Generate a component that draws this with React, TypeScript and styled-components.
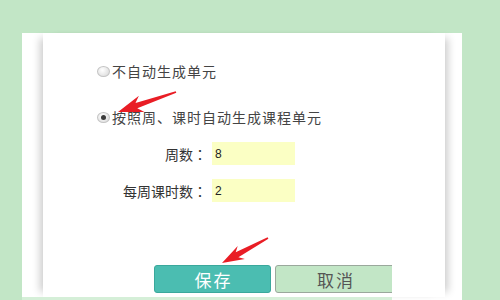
import React from 'react'
import styled, { createGlobalStyle } from 'styled-components'

const GlobalStyle = createGlobalStyle`
  body {
    margin: 0;
    font-family: "Noto Sans CJK SC", "Liberation Sans", sans-serif;
  }
  #root {
    width: 500px;
    height: 300px;
    overflow: hidden;
  }
`

const Page = styled.div`
  position: relative;
  width: 500px;
  height: 300px;
  box-sizing: border-box;
  padding: 33px 0 0 22px;
  background: #c2e6c6;
`

const Panel = styled.div`
  width: 440px;
  height: 267px;
  background: #ffffff;
  display: flex;
  flex-direction: column;
`

const PanelBody = styled.div`
  flex: 1;
  min-height: 0;
  padding-left: 21px;
`

const Content = styled.div`
  width: 402px;
  height: 100%;
  box-sizing: border-box;
  padding: 28px 0 0 54px;
  background: #ffffff;
  display: flex;
  flex-direction: column;
  box-shadow: -8px 0 8px -5px rgba(0, 0, 0, 0.2), 8px 0 8px -5px rgba(0, 0, 0, 0.2);
`

const Footer = styled.div`
  height: 3px;
  display: flex;
`

const FooterStrip = styled.div`
  width: 370px;
  background: #d5efd8;
`

const RadioRow = styled.label<{ $gap?: number }>`
  display: flex;
  align-items: center;
  height: 20px;
  margin-top: ${(p) => p.$gap ?? 0}px;
  font-size: 14px;
  letter-spacing: 1px;
  color: #444;
`

const RadioDot = styled.span<{ $checked?: boolean }>`
  position: relative;
  width: 11px;
  height: 9px;
  margin-right: 2px;
  border-radius: 50%;
  border: 1px solid #c4c4c4;
  background: radial-gradient(circle at 40% 35%, #ffffff, #d6d6d6);
  flex: none;

  &::after {
    content: '';
    display: ${(p) => (p.$checked ? 'block' : 'none')};
    position: absolute;
    left: 3px;
    top: 2px;
    width: 5px;
    height: 5px;
    border-radius: 50%;
    background: #3a3a3a;
  }
`

const Fields = styled.div`
  display: grid;
  grid-template-columns: 110px 83px;
  column-gap: 5px;
  row-gap: 14px;
  margin-top: 15px;
`

const FieldLabel = styled.span`
  display: flex;
  align-items: center;
  justify-content: flex-end;
  height: 23px;
  font-size: 14px;
  color: #333;
`

const Colon = styled.span`
  font-family: "Noto Sans CJK TC", "Noto Sans CJK SC", sans-serif;
`

const FieldInput = styled.input`
  box-sizing: border-box;
  width: 83px;
  height: 23px;
  border: none;
  outline: none;
  padding: 0 0 0 3px;
  background: #fbffc4;
  font-family: "Liberation Sans", Arial, sans-serif;
  font-size: 12px;
  color: #222;
`

const ButtonRow = styled.div`
  display: flex;
  gap: 4px;
  width: 238px;
  margin: 63px 0 0 57px;
  overflow: hidden;
`

const Button = styled.button<{ $primary?: boolean }>`
  flex: none;
  width: ${(p) => (p.$primary ? 117 : 120)}px;
  height: 28px;
  padding: 0 0 0 2px;
  border-radius: 3px;
  border: 1px solid ${(p) => (p.$primary ? '#3aa89c' : '#9aa89c')};
  background: ${(p) => (p.$primary ? '#4bbdb1' : '#c2e6c6')};
  color: ${(p) => (p.$primary ? '#ffffff' : '#555555')};
  font-family: "Noto Sans CJK SC", sans-serif;
  font-size: 17px;
  letter-spacing: 2px;
`

const Overlay = styled.svg`
  position: absolute;
  left: 0;
  top: 0;
  pointer-events: none;
`

type Pt = [number, number]

function arrowPoints(tip: Pt, tail: Pt, head: number, half: number): string {
  const dx = tail[0] - tip[0]
  const dy = tail[1] - tip[1]
  const len = Math.hypot(dx, dy)
  const ux = dx / len
  const uy = dy / len
  const px = -uy
  const py = ux
  const at = (d: number, w: number): Pt => [tip[0] + ux * d + px * w, tip[1] + uy * d + py * w]
  const pts: Pt[] = [
    tip,
    at(head, half),
    at(head * 0.78, 2.8),
    at(len, 0.8),
    at(len, -0.8),
    at(head * 0.78, -2.8),
    at(head, -half),
  ]
  return pts.map((p) => p.map((v) => v.toFixed(1)).join(',')).join(' ')
}

export default function App() {
  return (
    <>
      <GlobalStyle />
      <Page>
        <Panel>
          <PanelBody>
            <Content>
              <RadioRow>
                <RadioDot />
                不自动生成单元
              </RadioRow>
              <RadioRow $gap={26}>
                <RadioDot $checked />
                按照周、课时自动生成课程单元
              </RadioRow>
              <Fields>
                <FieldLabel>
                  周数<Colon>：</Colon>
                </FieldLabel>
                <FieldInput defaultValue="8" />
                <FieldLabel>
                  每周课时数<Colon>：</Colon>
                </FieldLabel>
                <FieldInput defaultValue="2" />
              </Fields>
              <ButtonRow>
                <Button $primary>保存</Button>
                <Button>取消</Button>
              </ButtonRow>
            </Content>
          </PanelBody>
          <Footer>
            <FooterStrip />
          </Footer>
        </Panel>
        <Overlay width="500" height="300" viewBox="0 0 500 300">
          <polygon points={arrowPoints([118, 112], [176, 92], 25, 8.5)} fill="#e91d25" />
          <polygon points={arrowPoints([222, 263], [268, 238], 22, 7.5)} fill="#e91d25" />
        </Overlay>
      </Page>
    </>
  )
}
